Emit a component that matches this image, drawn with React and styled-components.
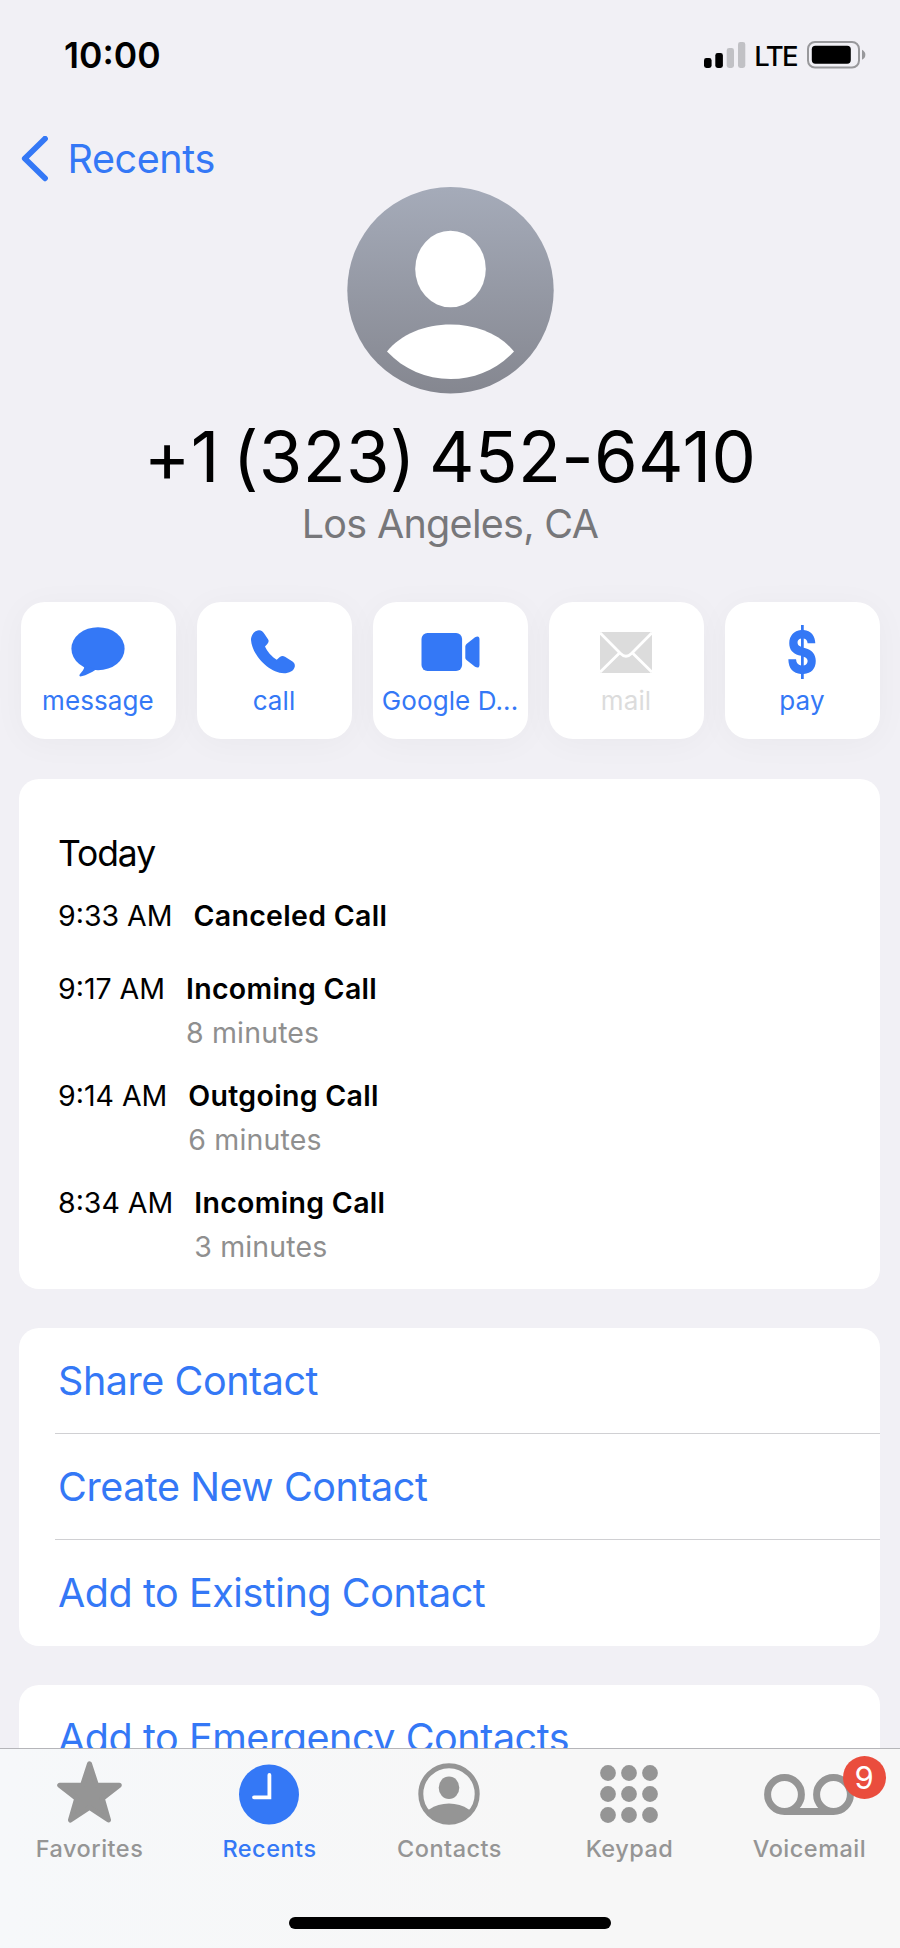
import React from "react"
import styled, { createGlobalStyle } from "styled-components"

const BLUE = "#3478f6"
const GRAY = "#959595"
const DISABLED = "#dcdcdc"
const BACKGROUND = "#f1f0f5"

const GlobalStyle = createGlobalStyle`
  body {
    margin: 0;
    background: ${BACKGROUND};
    font-family: Inter, "Liberation Sans", sans-serif;
    color: #000;
  }
  svg {
    display: block;
  }
`

const Screen = styled.div`
  width: 900px;
  height: 1948px;
  display: flex;
  flex-direction: column;
  overflow: hidden;
  background: ${BACKGROUND};
`

const StatusBar = styled.header`
  flex: none;
  box-sizing: border-box;
  height: 110px;
  padding: 0 34px 0 64px;
  display: flex;
  align-items: center;
  justify-content: space-between;
`

const Clock = styled.span`
  font-size: 35.5px;
  font-weight: 600;
  letter-spacing: 0;
`

const StatusIcons = styled.div`
  display: flex;
  align-items: center;
`

const Network = styled.span`
  margin: 2px 10px 0 8px;
  font-size: 27.5px;
  font-weight: 500;
  letter-spacing: -1.6px;
`

const NavBar = styled.nav`
  flex: none;
  height: 77px;
  padding: 0 21px;
  box-sizing: border-box;
  display: flex;
  align-items: flex-start;
`

const BackLink = styled.a`
  margin-top: 25px;
  height: 47px;
  display: flex;
  align-items: center;
  gap: 18.5px;
  color: ${BLUE};
  font-size: 39.5px;
  letter-spacing: -0.4px;
`

const Content = styled.main`
  flex: 1;
  min-height: 0;
  overflow: hidden;
`

const Profile = styled.section`
  height: 415px;
  display: flex;
  flex-direction: column;
  align-items: center;
`

const PhoneNumber = styled.h1`
  margin: 17px 0 0;
  font-size: 70.5px;
  font-weight: 400;
  line-height: 92px;
  letter-spacing: 0.3px;
  word-spacing: -7px;
  white-space: nowrap;
`

const Location = styled.p`
  margin: 0;
  font-size: 39.5px;
  line-height: 43px;
  letter-spacing: -0.7px;
  color: #77777a;
`

const Actions = styled.div`
  display: grid;
  grid-template-columns: repeat(5, 155px);
  column-gap: 21px;
  padding-left: 20.5px;
`

const ActionButton = styled.div`
  box-sizing: border-box;
  height: 137px;
  padding-top: 18px;
  display: flex;
  flex-direction: column;
  align-items: center;
  border-radius: 24px;
  background: #fff;
  box-shadow: 0 4px 34px rgba(0, 0, 0, 0.035);
  color: ${({ $disabled }) => ($disabled ? DISABLED : BLUE)};
`

const ActionIcon = styled.div`
  height: 64px;
  display: flex;
  align-items: center;
  justify-content: center;
`

const ActionLabel = styled.span`
  font-size: 26px;
  line-height: 34px;
  letter-spacing: 0.1px;
  white-space: nowrap;
`

const DollarSign = styled.span`
  font-size: 58px;
  font-weight: 800;
  line-height: 64px;
  transform: scaleX(0.8);
`

const Card = styled.section`
  box-sizing: border-box;
  width: 861px;
  margin: 0 auto 39px 19px;
  border-radius: 20px;
  background: #fff;
`

const HistoryCard = styled(Card)`
  height: 510px;
  margin-top: 40px;
  padding: 53px 39px 0;
`

const DayTitle = styled.h2`
  margin: 0 0 18px;
  font-size: 35.5px;
  font-weight: 400;
  line-height: 44px;
  letter-spacing: -1.1px;
`

const Call = styled.div`
  min-height: 53px;
  margin-bottom: 19.6px;
  display: flex;
  font-size: 28.5px;
  line-height: 43.7px;
`

const CallTime = styled.span`
  margin-right: 21px;
  white-space: nowrap;
`

const CallInfo = styled.div`
  display: flex;
  flex-direction: column;
`

const CallType = styled.span`
  font-weight: 600;
  letter-spacing: 0.3px;
`

const CallDuration = styled.span`
  margin-bottom: -2px;
  color: #8f8f8f;
  line-height: 45.7px;
  letter-spacing: 0.15px;
`

const LinkRow = styled.div`
  box-sizing: border-box;
  height: 106px;
  margin-left: 36px;
  padding-left: 3px;
  color: ${BLUE};
  font-size: 39.5px;
  line-height: 106px;
  letter-spacing: -0.45px;

  & + & {
    height: 107px;
    margin-top: -1px;
    border-top: 1px solid #d0d0d3;
  }
`

const TabBar = styled.footer`
  flex: none;
  box-sizing: border-box;
  height: 200px;
  border-top: 1px solid #b5b5b9;
  background: linear-gradient(90deg, #f6f8fa, #f7f7f7 60%);
`

const Tabs = styled.div`
  height: 168px;
  display: grid;
  grid-template-columns: repeat(5, 180px);
  margin-left: -0.5px;
`

const Tab = styled.div`
  padding-top: 9px;
  display: flex;
  flex-direction: column;
  align-items: center;
  color: ${({ $active }) => ($active ? BLUE : GRAY)};
`

const TabIcon = styled.div`
  position: relative;
  height: 72px;
  margin-right: 1px;
  display: flex;
  align-items: center;
`

const TabLabel = styled.span`
  margin-top: 4px;
  font-size: 23.5px;
  font-weight: 500;
  line-height: 30px;
  letter-spacing: 0.5px;
`

const Badge = styled.span`
  position: absolute;
  top: -2.5px;
  right: -31.5px;
  width: 43px;
  height: 43px;
  border-radius: 50%;
  background: #ea4d3d;
  color: #fff;
  font-size: 31px;
  line-height: 43px;
  text-align: center;
`

const HomeIndicator = styled.div`
  width: 322px;
  height: 12px;
  margin: 0 auto;
  border-radius: 6px;
  background: #000;
`

const SignalIcon = () => (
  <svg width="42" height="26" viewBox="0 0 42 26">
    <rect x="0" y="16" width="7.6" height="10" rx="2.4" />
    <rect x="11.3" y="11" width="7.6" height="15" rx="2.4" />
    <rect x="22.7" y="6" width="7.3" height="20" rx="2.4" fill="#c1c1c5" />
    <rect x="34" y="0" width="7.3" height="26" rx="2.4" fill="#c1c1c5" />
  </svg>
)

const BatteryIcon = () => (
  <svg width="59" height="28" viewBox="0 0 59 28">
    <rect
      x="1"
      y="1"
      width="51"
      height="25.6"
      rx="7"
      fill="none"
      stroke="#98989b"
      strokeWidth="2"
    />
    <rect x="4.8" y="4.7" width="39" height="18" rx="3.6" />
    <path d="M55 8.8c4.5 2 4.5 8 0 10z" fill="#98989b" />
  </svg>
)

const BackIcon = () => (
  <svg width="28" height="46" viewBox="0 0 28 46" fill="none">
    <path
      d="M24 2.700L3.800 22.500L24 42.300"
      stroke="currentColor"
      strokeWidth="5.800"
      strokeLinecap="round"
      strokeLinejoin="round"
    />
  </svg>
)

const Avatar = () => (
  <svg width="207" height="207" viewBox="0 0 207 207">
    <defs>
      <linearGradient id="avatar" x1="0" y1="0" x2="0" y2="1">
        <stop offset="0" stopColor="#a5abb9" />
        <stop offset="1" stopColor="#858790" />
      </linearGradient>
    </defs>
    <circle cx="103.5" cy="103.3" r="103.2" fill="url(#avatar)" />
    <ellipse cx="103.5" cy="82" rx="35.3" ry="38.3" fill="#fff" />
    <path
      d="M40 164.5C54 147 78 137.5 103.5 137.5S153 147 167 164.5C150 182.500 128 192 103.500 192S57 182.500 40 164.500z"
      fill="#fff"
    />
  </svg>
)

const MessageIcon = () => (
  <svg width="54" height="50" viewBox="0 0 54 50" fill="currentColor">
    <ellipse cx="27" cy="21.700" rx="26.600" ry="21.500" />
    <path d="M12.500 38.500C14.500 41 11.500 44 9 47C7.800 48.600 8.500 49.700 10.500 49.300C15.500 48.200 20.500 45.500 25 42.500z" />
  </svg>
)

const PhoneIcon = () => (
  <svg width="46" height="44" viewBox="0 0 46 44" fill="currentColor">
    <path d="M8 .2C10.500 .2 12 1.800 13.500 4L17 9.200C18.200 11 17.600 12.500 16.300 14L14 16.600C16 21.500 21 27 25.700 29.800L28.800 27C30.700 25.500 32.300 25.700 34 26.700L41.500 31.500C43.600 33 44 34.500 43.800 36.500C43 41 38 43.300 33 43.300C18 43 1 25 0 10C0 5 3.500 .3 8 .2z" />
  </svg>
)

const VideoIcon = () => (
  <svg width="60" height="38" viewBox="-1.5 0 60 38" fill="currentColor">
    <rect width="40.600" height="38" rx="6" />
    <path d="M43.800 13.500Q43.800 12 45 11L53.500 4.200Q58 1.800 58 6.500V31.500Q58 36.200 53.500 33.800L45 27Q43.800 26 43.800 24.500z" />
  </svg>
)

const MailIcon = () => (
  <svg width="52" height="41" viewBox="0 0 52 41">
    <rect width="52" height="41" rx="1" fill="currentColor" />
    <path
      d="M0 .8L20.500 21.500Q26 27 31.500 21.500L52 .8M0 40.200L19.500 21M52 40.200L32.500 21"
      fill="none"
      stroke="#fff"
      strokeWidth="2.800"
    />
  </svg>
)

const StarIcon = () => (
  <svg width="65" height="66" viewBox="0 0 65 66">
    <path
      d="M32.500 2.800L39.500 24.200H62.300L45.300 37.500L51.500 59L32.500 46.300L13.500 59L19.700 37.500L2.700 24.200H25.500z"
      fill="currentColor"
      stroke="currentColor"
      strokeWidth="5"
      strokeLinejoin="round"
    />
  </svg>
)

const ClockIcon = () => (
  <svg width="60" height="61" viewBox="0 0 60 61">
    <circle cx="30" cy="30.500" r="30" fill="currentColor" />
    <path
      d="M30.400 11V33.300H15"
      fill="none"
      stroke="#fff"
      strokeWidth="3.800"
      strokeLinecap="round"
    />
  </svg>
)

const ContactIcon = () => (
  <svg width="62" height="62" viewBox="0 0 62 62">
    <defs>
      <clipPath id="contact">
        <circle cx="31" cy="31" r="29" />
      </clipPath>
    </defs>
    <circle
      cx="31"
      cy="31"
      r="28.200"
      fill="none"
      stroke="currentColor"
      strokeWidth="5"
    />
    <ellipse cx="31" cy="24.700" rx="10.300" ry="11.300" fill="currentColor" />
    <ellipse
      cx="31"
      cy="60.500"
      rx="27.500"
      ry="20"
      fill="currentColor"
      clipPath="url(#contact)"
    />
  </svg>
)

const KeypadIcon = () => (
  <svg width="58" height="58" viewBox="0 0 58 58" fill="currentColor">
    {[8, 29, 50].map((y) =>
      [8, 29, 50].map((x) => <circle key={`${x}-${y}`} cx={x} cy={y} r="7.900" />)
    )}
  </svg>
)

const VoicemailIcon = () => (
  <svg width="90" height="41" viewBox="0 0 90 41">
    <g fill="none" stroke="currentColor" strokeWidth="7">
      <circle cx="20.500" cy="20.500" r="16.900" />
      <circle cx="69.500" cy="20.500" r="16.900" />
      <path d="M20.500 37.400h49" />
    </g>
  </svg>
)

const actions = [
  { label: "message", icon: <MessageIcon /> },
  { label: "call", icon: <PhoneIcon /> },
  { label: "Google D...", icon: <VideoIcon /> },
  { label: "mail", icon: <MailIcon />, disabled: true },
  { label: "pay", icon: <DollarSign>$</DollarSign> },
]

const calls = [
  { time: "9:33 AM", type: "Canceled Call" },
  { time: "9:17 AM", type: "Incoming Call", duration: "8 minutes" },
  { time: "9:14 AM", type: "Outgoing Call", duration: "6 minutes" },
  { time: "8:34 AM", type: "Incoming Call", duration: "3 minutes" },
]

const contactLinks = ["Share Contact", "Create New Contact", "Add to Existing Contact"]

const tabs = [
  { label: "Favorites", icon: <StarIcon /> },
  { label: "Recents", icon: <ClockIcon />, active: true },
  { label: "Contacts", icon: <ContactIcon /> },
  { label: "Keypad", icon: <KeypadIcon /> },
  { label: "Voicemail", icon: <VoicemailIcon />, badge: 9 },
]

const App = () => (
  <>
    <GlobalStyle />
    <Screen>
      <StatusBar>
        <Clock>10:00</Clock>
        <StatusIcons>
          <SignalIcon />
          <Network>LTE</Network>
          <BatteryIcon />
        </StatusIcons>
      </StatusBar>
      <NavBar>
        <BackLink>
          <BackIcon />
          Recents
        </BackLink>
      </NavBar>
      <Content>
        <Profile>
          <Avatar />
          <PhoneNumber>+1 (323) 452-6410</PhoneNumber>
          <Location>Los Angeles, CA</Location>
        </Profile>
        <Actions>
          {actions.map(({ label, icon, disabled }) => (
            <ActionButton key={label} $disabled={disabled}>
              <ActionIcon>{icon}</ActionIcon>
              <ActionLabel>{label}</ActionLabel>
            </ActionButton>
          ))}
        </Actions>
        <HistoryCard>
          <DayTitle>Today</DayTitle>
          {calls.map(({ time, type, duration }) => (
            <Call key={time}>
              <CallTime>{time}</CallTime>
              <CallInfo>
                <CallType>{type}</CallType>
                {duration && <CallDuration>{duration}</CallDuration>}
              </CallInfo>
            </Call>
          ))}
        </HistoryCard>
        <Card>
          {contactLinks.map((link) => (
            <LinkRow key={link}>{link}</LinkRow>
          ))}
        </Card>
        <Card>
          <LinkRow>Add to Emergency Contacts</LinkRow>
        </Card>
      </Content>
      <TabBar>
        <Tabs>
          {tabs.map(({ label, icon, active, badge }) => (
            <Tab key={label} $active={active}>
              <TabIcon>
                {icon}
                {badge && <Badge>{badge}</Badge>}
              </TabIcon>
              <TabLabel>{label}</TabLabel>
            </Tab>
          ))}
        </Tabs>
        <HomeIndicator />
      </TabBar>
    </Screen>
  </>
)

export default App
